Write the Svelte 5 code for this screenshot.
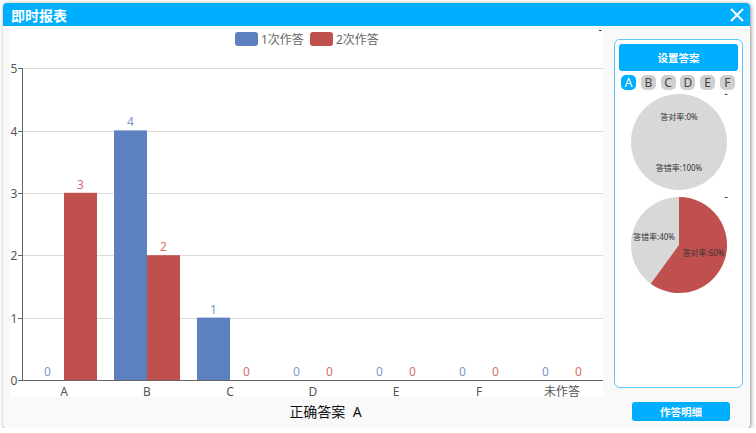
<script>
  const ticks = [
    { label: 5, y: 68 },
    { label: 4, y: 131 },
    { label: 3, y: 193 },
    { label: 2, y: 255 },
    { label: 1, y: 318 },
    { label: 0, y: 380 },
  ];
  const unit = 62.4;
  const baseY = 380;
  const barW = 33;
  const groups = [
    { name: 'A', x: 64, first: 0, second: 3 },
    { name: 'B', x: 147, first: 4, second: 2 },
    { name: 'C', x: 230, first: 1, second: 0 },
    { name: 'D', x: 313, first: 0, second: 0 },
    { name: 'E', x: 396, first: 0, second: 0 },
    { name: 'F', x: 479, first: 0, second: 0 },
    { name: '未作答', x: 562, first: 0, second: 0 },
  ];
  const options = ['A', 'B', 'C', 'D', 'E', 'F'];

  // red slice of the second pie: 60% clockwise from 12 o'clock
  const r = 48;
  const cx = 60;
  const cy = 52;
  const end = 0.6 * 2 * Math.PI;
  const sliceX = (cx + r * Math.sin(end)).toFixed(2);
  const sliceY = (cy - r * Math.cos(end)).toFixed(2);
</script>

<div class="dialog">
  <header class="title">
    <span>即时报表</span>
    <svg class="close" viewBox="0 0 14 14" aria-label="关闭">
      <path d="M1 1 13 13M13 1 1 13" />
    </svg>
  </header>

  <div class="content">
    <section class="report">
      <svg class="chart" viewBox="10 26 593 371">
        <rect x="235" y="32" width="23" height="14" rx="3" fill="#5d80bf" />
        <text class="legend" x="261" y="44">1次作答</text>
        <rect x="310" y="32" width="23" height="14" rx="3" fill="#c0504e" />
        <text class="legend" x="336" y="44">2次作答</text>
        <text class="dash" x="600" y="33" text-anchor="middle">-</text>

        {#each ticks as t}
          {#if t.label > 0}
            <line x1="22" x2="603" y1={t.y + 0.5} y2={t.y + 0.5} stroke="#dcdcdc" />
          {/if}
          <line x1="18" x2="22" y1={t.y + 0.5} y2={t.y + 0.5} stroke="#666" />
          <text class="axis" x="14" y={t.y + 5} text-anchor="middle">{t.label}</text>
        {/each}

        {#each groups as g}
          <rect x={g.x - barW} y={baseY - g.first * unit} width={barW} height={g.first * unit} fill="#5d80bf" />
          <rect x={g.x} y={baseY - g.second * unit} width={barW} height={g.second * unit} fill="#c0504e" />
          <text class="value blue" x={g.x - barW / 2} y={baseY - g.first * unit - 4} text-anchor="middle">{g.first}</text>
          <text class="value red" x={g.x + barW / 2} y={baseY - g.second * unit - 4} text-anchor="middle">{g.second}</text>
          <text class="axis" x={g.x} y="396" text-anchor="middle">{g.name}</text>
        {/each}

        <line x1="22.5" x2="22.5" y1="68" y2="380" stroke="#666" />
        <line x1="18" x2="603" y1="380.5" y2="380.5" stroke="#666" />
      </svg>
      <div class="answer">正确答案&nbsp;&nbsp;A</div>
    </section>

    <aside class="side">
      <div class="panel">
        <button type="button" class="set">设置答案</button>
        <div class="options">
          {#each options as o, i}
            <span class="option" class:active={i === 0}>{o}</span>
          {/each}
        </div>

        <svg class="pie" viewBox="0 0 119 103">
          <text class="dash" x="107" y="7" text-anchor="middle">-</text>
          <circle {cx} {cy} {r} fill="#d8d8d8" />
          <text class="pie-label" x={cx} y="30" text-anchor="middle">答对率:0%</text>
          <text class="pie-label" x={cx} y="81" text-anchor="middle">答错率:100%</text>
        </svg>

        <svg class="pie" viewBox="0 0 119 103">
          <text class="dash" x="107" y="7" text-anchor="middle">-</text>
          <circle {cx} {cy} {r} fill="#d8d8d8" />
          <path d="M{cx} {cy}V{cy - r}A{r} {r} 0 1 1 {sliceX} {sliceY}Z" fill="#c0504e" />
          <text class="pie-label" x="35" y="47" text-anchor="middle">答错率:40%</text>
          <text class="pie-label" x="84.5" y="63" text-anchor="middle">答对率:60%</text>
        </svg>
      </div>
      <button type="button" class="detail">作答明细</button>
    </aside>
  </div>
</div>

<style>
  :global(body) {
    background: #fff;
    font-family: "Noto Sans", "Noto Sans CJK SC", sans-serif;
  }

  .dialog {
    display: flex;
    flex-direction: column;
    width: 747px;
    height: 425px;
    margin: 3px 0 0 3px;
    border-radius: 4px;
    background: #f9f9f9;
    box-shadow: 1px 1px 4px rgba(0, 0, 0, 0.45);
    overflow: hidden;
  }

  .title {
    flex: none;
    display: flex;
    align-items: center;
    justify-content: space-between;
    height: 23px;
    padding: 0 6px 0 8px;
    background: #00aeff;
    color: #fff;
    font-size: 14px;
    font-weight: 700;
  }

  .close {
    width: 14px;
    height: 14px;
  }

  .close path {
    fill: none;
    stroke: #fff;
    stroke-width: 2;
  }

  .content {
    flex: 1;
    display: flex;
    min-height: 0;
  }

  .report {
    width: 600px;
    padding-left: 7px;
    box-sizing: border-box;
  }

  .chart {
    display: block;
    width: 593px;
    height: 371px;
    background: #fff;
  }

  .legend {
    font-size: 12px;
    fill: #666;
  }

  .axis {
    font-size: 12px;
    fill: #555;
  }

  .value {
    font-size: 12px;
  }

  .blue {
    fill: #7d97cb;
  }

  .red {
    fill: #d46f6d;
  }

  .dash {
    font-size: 10px;
    fill: #111;
  }

  .answer {
    height: 31px;
    line-height: 30px;
    text-align: center;
    font-size: 14px;
    color: #111;
    padding-left: 38px;
    box-sizing: border-box;
  }

  .side {
    flex: 1;
    display: flex;
    flex-direction: column;
    align-items: flex-start;
    padding: 13px 7px 0 11px;
    box-sizing: border-box;
  }

  .panel {
    width: 129px;
    height: 349px;
    box-sizing: border-box;
    padding: 4px 4px 0;
    background: #fff;
    border: 1px solid #5cc6f5;
    border-radius: 6px;
  }

  button {
    display: block;
    border: none;
    background: #00aeff;
    color: #fff;
    font: inherit;
    font-weight: 700;
    font-size: 10.5px;
    border-radius: 3px;
    padding: 0;
  }

  .set {
    width: 119px;
    height: 27px;
  }

  .options {
    display: flex;
    justify-content: space-between;
    margin: 4px 3px 0 2px;
  }

  .option {
    width: 15px;
    height: 15px;
    line-height: 15px;
    border-radius: 5px;
    background: #cfcfcf;
    color: #444;
    font-size: 12px;
    text-align: center;
  }

  .option.active {
    background: #00aeff;
    color: #fff;
  }

  .pie {
    display: block;
    width: 119px;
    height: 103px;
  }

  .pie-label {
    font-size: 8px;
    fill: #333;
  }

  .detail {
    width: 98px;
    height: 19px;
    margin: 14px 0 0 18px;
  }
</style>
